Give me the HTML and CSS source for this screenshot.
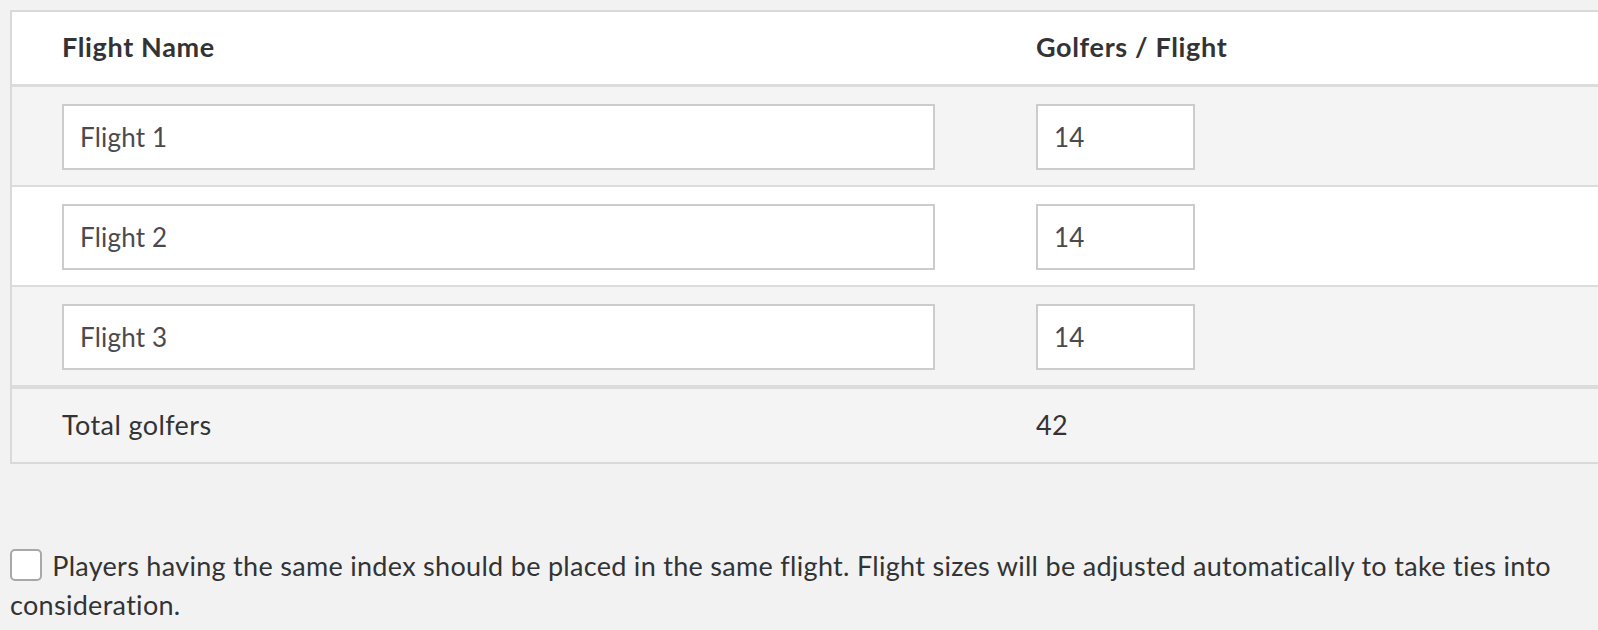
FILE: index.html
```html
<!DOCTYPE html>
<html>
<head>
<meta charset="utf-8">
<link rel="stylesheet" href="styles.css">
</head>
<body>
<div class="flights">
  <div class="row head">
    <div class="c1">Flight Name</div>
    <div class="c2">Golfers / Flight</div>
  </div>
  <div class="row body gray">
    <div class="c1"><input class="name" type="text" value="Flight 1"></div>
    <div class="c2"><input class="num" type="text" value="14"></div>
  </div>
  <div class="row body white">
    <div class="c1"><input class="name" type="text" value="Flight 2"></div>
    <div class="c2"><input class="num" type="text" value="14"></div>
  </div>
  <div class="row body gray last">
    <div class="c1"><input class="name" type="text" value="Flight 3"></div>
    <div class="c2"><input class="num" type="text" value="14"></div>
  </div>
  <div class="row total">
    <div class="c1">Total golfers</div>
    <div class="c2">42</div>
  </div>
</div>
<label class="option">
  <span class="box"></span>
  <span class="text">Players having the same index should be placed in the same flight. Flight sizes will be adjusted automatically to take ties into consideration.</span>
</label>
</body>
</html>
```

FILE: styles.css
```css
html, body {
  margin: 0;
  padding: 0;
  background: #f2f2f2;
  font-family: Lato, "Liberation Sans", sans-serif;
  color: #333335;
}
body {
  padding-top: 10px;
  overflow: hidden;
}
.flights {
  margin-left: 10px;
  border: 2px solid #d9d9d9;
  border-right: none;
  background: #f4f4f4;
}
.row {
  display: flex;
  align-items: center;
}
.c1 {
  width: 1024px;
  flex: none;
  box-sizing: border-box;
  padding-left: 50px;
}
.c2 {
  flex: 1;
}
.head {
  background: #fff;
  border-bottom: 3px solid #dcdcdc;
  font-weight: 700;
  font-size: 27px;
  letter-spacing: 0.65px;
  padding-bottom: 4px;
  box-sizing: content-box;
  height: 68px;
}
.body {
  border-bottom: 2px solid #dcdcdc;
  padding-top: 2px;
  box-sizing: border-box;
  height: 100px;
}
.body.last {
  border-bottom: 4px solid #dcdcdc;
  height: 102px;
}
.gray { background: #f4f4f4; }
.white { background: #fff; }
input {
  box-sizing: border-box;
  height: 66px;
  border: 2px solid #cccccc;
  background: #fff;
  padding: 0 0 0 16px;
  margin: 0;
  font-family: Lato, "Liberation Sans", sans-serif;
  font-size: 26px;
  letter-spacing: 0.2px;
  color: #4a4a4c;
  outline: none;
  display: block;
}
.name { width: 873px; }
.num { width: 159px; }
.total {
  height: 73px;
  font-size: 27px;
  letter-spacing: 0.4px;
  padding-bottom: 2px;
  box-sizing: border-box;
}
.option {
  display: block;
  margin: 82px 0 0 10px;
  font-size: 27px;
  letter-spacing: 0.3px;
  line-height: 39px;
  color: #333335;
}
.box {
  display: inline-block;
  width: 32px;
  height: 32px;
  box-sizing: border-box;
  border: 2px solid #a8a8a8;
  border-radius: 5px;
  background: #fff;
  vertical-align: -5px;
  margin-right: 3px;
}
```
